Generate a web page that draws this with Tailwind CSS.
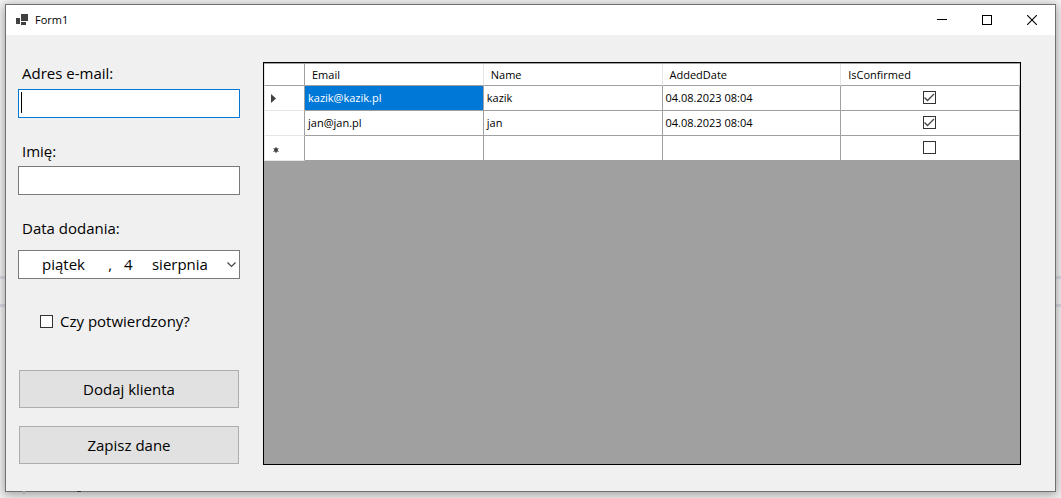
<!DOCTYPE html>
<html lang="pl">
<head>
<meta charset="utf-8">
<meta name="viewport" content="width=device-width, initial-scale=1">
<title>Form1</title>
<script src="https://cdn.jsdelivr.net/npm/@tailwindcss/browser@4"></script>
</head>
<body class="relative flex min-h-screen flex-col bg-[#f4f4f4] bg-[linear-gradient(to_bottom,transparent_276px,#dcdce6_276px,#dcdce6_279px,transparent_279px,transparent_304px,#dcdce6_304px,#dcdce6_307px,transparent_307px)] px-[5px] pt-1 pb-1.5 font-['Open_Sans','Noto_Sans',sans-serif] text-[15px] text-black">
<div class="flex flex-1 flex-col border border-[#707070] bg-[#f0f0f0] shadow-[0_2px_10px_1px_rgba(0,0,0,0.35)]">
  <header class="flex h-[30px] items-center bg-white pl-2.5">
    <svg class="h-3 w-3" viewBox="0 0 12 12" fill="#404040" shape-rendering="crispEdges" aria-hidden="true"><path d="M5 0h7v7H5zM0 4h4v6H0zM5 8h5v3H5z"/></svg>
    <h1 class="ml-[7px] text-[11px] leading-4">Form1</h1>
    <div class="ml-auto flex h-full">
      <button type="button" aria-label="Minimalizuj" class="flex w-[46px] items-center justify-center"><svg class="h-2.5 w-2.5" viewBox="0 0 10 10" shape-rendering="crispEdges"><path d="M0 4h10v1H0z"/></svg></button>
      <button type="button" aria-label="Maksymalizuj" class="flex w-11 items-center justify-center"><svg class="h-2.5 w-2.5" viewBox="0 0 10 10" fill="none" stroke="#000" shape-rendering="crispEdges"><path d="M.5.5h9v9h-9z"/></svg></button>
      <button type="button" aria-label="Zamknij" class="flex w-[46px] items-center justify-center"><svg class="h-2.5 w-2.5" viewBox="0 0 10 10" fill="none" stroke="#000" stroke-width="1.1"><path d="M0 0l10 10M10 0L0 10"/></svg></button>
    </div>
  </header>
  <main class="flex flex-1 pt-[27px] pr-[34px] pb-[26px] pl-3">
    <form class="flex w-[222px] flex-col">
      <label for="email" class="pl-1 leading-[22px]">Adres e-mail:</label>
      <div class="relative mt-[5px]">
        <input id="email" type="text" class="block h-[29px] w-full border border-[#0078d7] bg-white px-1 outline-none">
        <span class="absolute top-[3px] left-[3px] h-[21px] w-px bg-black"></span>
      </div>
      <label for="imie" class="mt-[22px] pl-1 leading-[22px]">Imię:</label>
      <input id="imie" type="text" class="mt-1 h-[29px] border border-[#7a7a7a] bg-white px-1 outline-none">
      <label for="data" class="mt-[22px] pl-1 leading-[22px]">Data dodania:</label>
      <div class="relative mt-[11px]">
        <select id="data" class="block h-[29px] w-full appearance-none border border-[#7a7a7a] bg-white pl-[23px] outline-none"><option>piątek&nbsp;&nbsp;&nbsp;&nbsp;&nbsp;&nbsp;,&nbsp;&nbsp;&nbsp;4&nbsp;&nbsp;&nbsp;&nbsp;&nbsp;sierpnia</option></select>
        <svg class="pointer-events-none absolute top-3 right-1 h-1.5 w-[9px]" viewBox="0 0 9 6" fill="none" stroke="#444" stroke-width="1.2" aria-hidden="true"><path d="M.5.5l4 4 4-4"/></svg>
      </div>
      <div class="mt-8 flex h-5 items-center pl-[22px]">
        <input id="potwierdzony" type="checkbox" class="h-[13px] w-[13px] appearance-none border border-[#333] bg-white">
        <label for="potwierdzony" class="ml-[7px] leading-5">Czy potwierdzony?</label>
      </div>
      <button type="button" class="mx-px mt-[39px] h-[38px] border border-[#adadad] bg-[#e1e1e1]">Dodaj klienta</button>
      <button type="button" class="mx-px mt-[18px] h-[38px] border border-[#adadad] bg-[#e1e1e1]">Zapisz dane</button>
    </form>
    <section class="ml-[23px] flex-1 border border-black bg-[#a0a0a0]" aria-label="Klienci">
      <table class="w-full table-fixed border-separate border-spacing-0 border-t border-[#a0a0a0] bg-white text-left text-[11px] leading-4">
        <thead>
          <tr class="h-[22px]">
            <th aria-label="Wiersz" class="w-[41px] border-r border-b border-l border-r-[#a0a0a0] border-b-[#a0a0a0] border-l-[#e5e5e5] p-0"></th>
            <th class="border-r border-b border-r-[#e5e5e5] border-b-[#a0a0a0] p-0 pl-[7px] font-normal">Email</th>
            <th class="border-r border-b border-r-[#e5e5e5] border-b-[#a0a0a0] p-0 pl-[7px] font-normal">Name</th>
            <th class="border-r border-b border-r-[#e5e5e5] border-b-[#a0a0a0] p-0 pl-[7px] font-normal">AddedDate</th>
            <th class="border-r border-b border-r-[#e5e5e5] border-b-[#a0a0a0] p-0 pl-[7px] font-normal">IsConfirmed</th>
          </tr>
        </thead>
        <tbody>
          <tr class="h-[25px]">
            <td class="border-r border-b border-l border-r-[#a0a0a0] border-b-[#e5e5e5] border-l-[#e5e5e5] p-0 pl-1.5"><svg class="h-[9px] w-[5px]" viewBox="0 0 5 9" fill="#404040" aria-hidden="true"><path d="M0 0l5 4.5L0 9z"/></svg></td>
            <td class="border-r border-b border-[#a0a0a0] bg-[#0078d7] p-0 pl-[3px] text-white">kazik@kazik.pl</td>
            <td class="border-r border-b border-[#a0a0a0] p-0 pl-[3px]">kazik</td>
            <td class="border-r border-b border-[#a0a0a0] p-0 pl-[3px]">04.08.2023 08:04</td>
            <td class="border-r border-b border-[#a0a0a0] p-0 pr-0.5 pb-0.5">
              <div class="relative mx-auto h-[13px] w-[13px]">
                <input type="checkbox" checked aria-label="kazik IsConfirmed" class="block h-[13px] w-[13px] appearance-none border border-[#333] bg-white">
                <svg class="pointer-events-none absolute inset-0 h-[13px] w-[13px]" viewBox="0 0 13 13" fill="none" stroke="#444" stroke-width="1.3"><path d="M1.500 6.500l3 3 6.500-6.500"/></svg>
              </div>
            </td>
          </tr>
          <tr class="h-[25px]">
            <td class="border-r border-b border-l border-r-[#a0a0a0] border-b-[#e5e5e5] border-l-[#e5e5e5] p-0"></td>
            <td class="border-r border-b border-[#a0a0a0] p-0 pl-[3px]">jan@jan.pl</td>
            <td class="border-r border-b border-[#a0a0a0] p-0 pl-[3px]">jan</td>
            <td class="border-r border-b border-[#a0a0a0] p-0 pl-[3px]">04.08.2023 08:04</td>
            <td class="border-r border-b border-[#a0a0a0] p-0 pr-0.5 pb-0.5">
              <div class="relative mx-auto h-[13px] w-[13px]">
                <input type="checkbox" checked aria-label="jan IsConfirmed" class="block h-[13px] w-[13px] appearance-none border border-[#333] bg-white">
                <svg class="pointer-events-none absolute inset-0 h-[13px] w-[13px]" viewBox="0 0 13 13" fill="none" stroke="#444" stroke-width="1.3"><path d="M1.500 6.500l3 3 6.500-6.500"/></svg>
              </div>
            </td>
          </tr>
          <tr class="h-[25px]">
            <td class="border-r border-b border-l border-r-[#a0a0a0] border-b-[#e5e5e5] border-l-[#e5e5e5] p-0 pt-1 pl-2"><svg class="block h-1.5 w-1.5" viewBox="0 0 6 6" stroke="#505050" stroke-width="1" aria-hidden="true"><path d="M3 0v6M.4 1.500l5.200 3M5.600 1.500l-5.200 3"/><circle cx="3" cy="3" r="2" fill="#404040" stroke="none"/></svg></td>
            <td class="border-r border-b border-[#a0a0a0] p-0"></td>
            <td class="border-r border-b border-[#a0a0a0] p-0"></td>
            <td class="border-r border-b border-[#a0a0a0] p-0"></td>
            <td class="border-r border-b border-[#a0a0a0] p-0 pr-0.5 pb-0.5"><input type="checkbox" aria-label="Nowy wiersz IsConfirmed" class="mx-auto block h-[13px] w-[13px] appearance-none border border-[#333] bg-white"></td>
          </tr>
        </tbody>
      </table>
    </section>
  </main>
</div>
<span class="absolute bottom-1 left-[23px] h-[3px] w-0.5 bg-[#a8a8a8]"></span>
<span class="absolute bottom-1.5 left-[77px] h-px w-1 bg-[#303030]"></span>
</body>
</html>
